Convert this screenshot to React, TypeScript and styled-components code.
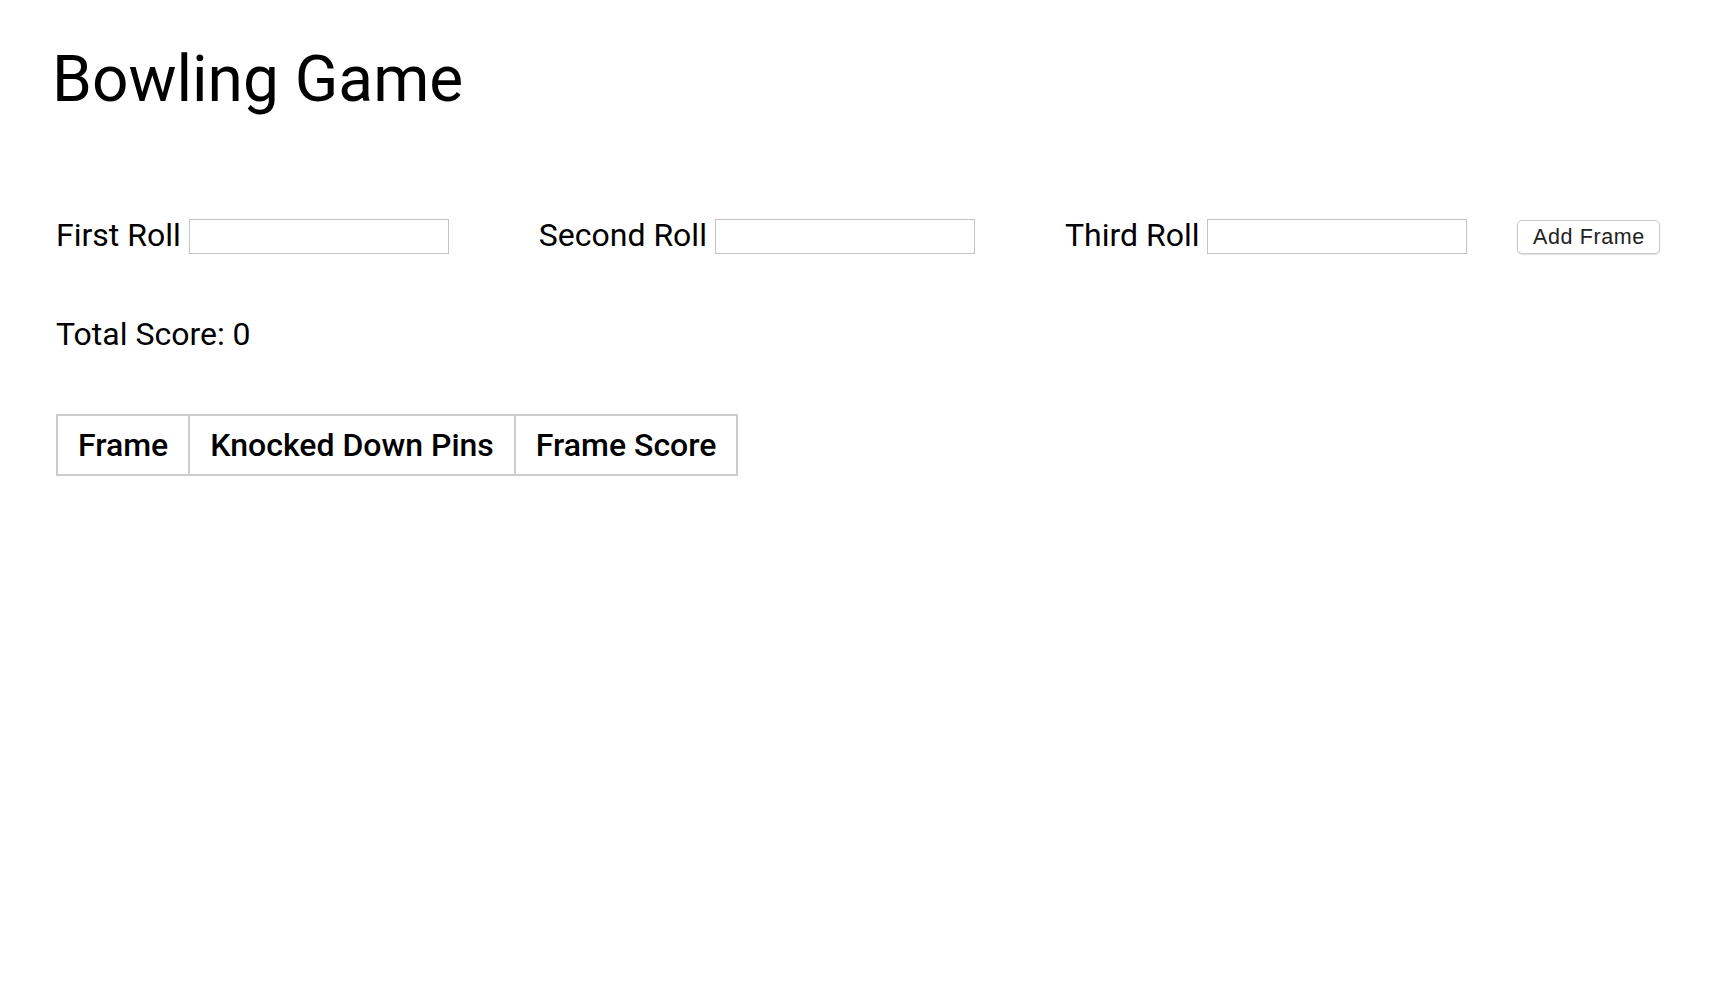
import React, { useState } from "react";
import styled, { createGlobalStyle } from "styled-components";

const GlobalStyle = createGlobalStyle`
  html, body {
    margin: 0;
    padding: 0;
    background: #ffffff;
  }
  body {
    font-family: Roboto, "Noto Sans", "Liberation Sans", sans-serif;
    color: #000000;
  }
`;

const Page = styled.div`
  padding: 42px 56px 0 56px;
`;

const Title = styled.h1`
  margin: 0;
  font-size: 64px;
  font-weight: 400;
  line-height: 75px;
  margin-left: -4px;
`;

const RollRow = styled.form`
  display: flex;
  align-items: center;
  margin-top: 102px;
  height: 35px;
`;

const RollField = styled.label<{ $trail: number }>`
  display: flex;
  align-items: center;
  gap: 8px;
  margin-right: ${(p) => p.$trail}px;
  font-size: 32px;
`;

const RollText = styled.span`
  margin-bottom: 4px;
`;

const RollInput = styled.input`
  box-sizing: border-box;
  width: 260px;
  height: 35px;
  border: 1.5px solid #c4c4c4;
  background: #ffffff;
  font-size: 20px;
  padding: 0 6px;
  outline: none;
`;

const AddButton = styled.button`
  box-sizing: border-box;
  width: 143px;
  height: 34px;
  padding-top: 3px;
  border: 1px solid #c8c8c8;
  border-radius: 5px;
  background: #ffffff;
  box-shadow: 0 1px 1px rgba(0, 0, 0, 0.12);
  font-family: "Liberation Sans", Arial, sans-serif;
  font-size: 21.5px;
  letter-spacing: 0.6px;
  color: #222222;
  cursor: pointer;
`;

const TotalScore = styled.div`
  margin-top: 62px;
  font-size: 32px;
  line-height: 37px;
`;

const ScoreTable = styled.table`
  margin-top: 61px;
  border-collapse: collapse;
  border: 2px solid #cccccc;
`;

const HeadCell = styled.th`
  border: 2px solid #cccccc;
  padding: 11px 20px 10px 20px;
  font-size: 32px;
  line-height: 37px;
  font-weight: 500;
  text-align: left;
  white-space: nowrap;
`;

type Frame = { pins: string; score: number };

const App = () => {
  const [first, setFirst] = useState("");
  const [second, setSecond] = useState("");
  const [third, setThird] = useState("");
  const [frames, setFrames] = useState<Frame[]>([]);

  const total = frames.reduce((sum, f) => sum + f.score, 0);

  const handleAdd = (e: React.FormEvent<HTMLElement>) => {
    e.preventDefault();
    const rolls = [first, second, third].filter((r) => r !== "").map((r) => parseInt(r) || 0);
    if (rolls.length === 0) return;
    setFrames([...frames, { pins: rolls.join(", "), score: rolls.reduce((a, b) => a + b, 0) }]);
    setFirst("");
    setSecond("");
    setThird("");
  };

  return (
    <>
      <GlobalStyle />
      <Page>
        <Title>Bowling Game</Title>

        <RollRow onSubmit={handleAdd}>
          <RollField $trail={90}>
            <RollText>First Roll</RollText>
            <RollInput value={first} onChange={(e) => setFirst(e.target.value)} />
          </RollField>
          <RollField $trail={90}>
            <RollText>Second Roll</RollText>
            <RollInput value={second} onChange={(e) => setSecond(e.target.value)} />
          </RollField>
          <RollField $trail={50}>
            <RollText>Third Roll</RollText>
            <RollInput value={third} onChange={(e) => setThird(e.target.value)} />
          </RollField>
          <AddButton type="submit">Add Frame</AddButton>
        </RollRow>

        <TotalScore>Total Score: {total}</TotalScore>

        <ScoreTable>
          <thead>
            <tr>
              <HeadCell>Frame</HeadCell>
              <HeadCell>Knocked Down Pins</HeadCell>
              <HeadCell>Frame Score</HeadCell>
            </tr>
          </thead>
          <tbody>
            {frames.map((f, i) => (
              <tr key={i}>
                <HeadCell as="td">{i + 1}</HeadCell>
                <HeadCell as="td">{f.pins}</HeadCell>
                <HeadCell as="td">{f.score}</HeadCell>
              </tr>
            ))}
          </tbody>
        </ScoreTable>
      </Page>
    </>
  );
};

export default App;
